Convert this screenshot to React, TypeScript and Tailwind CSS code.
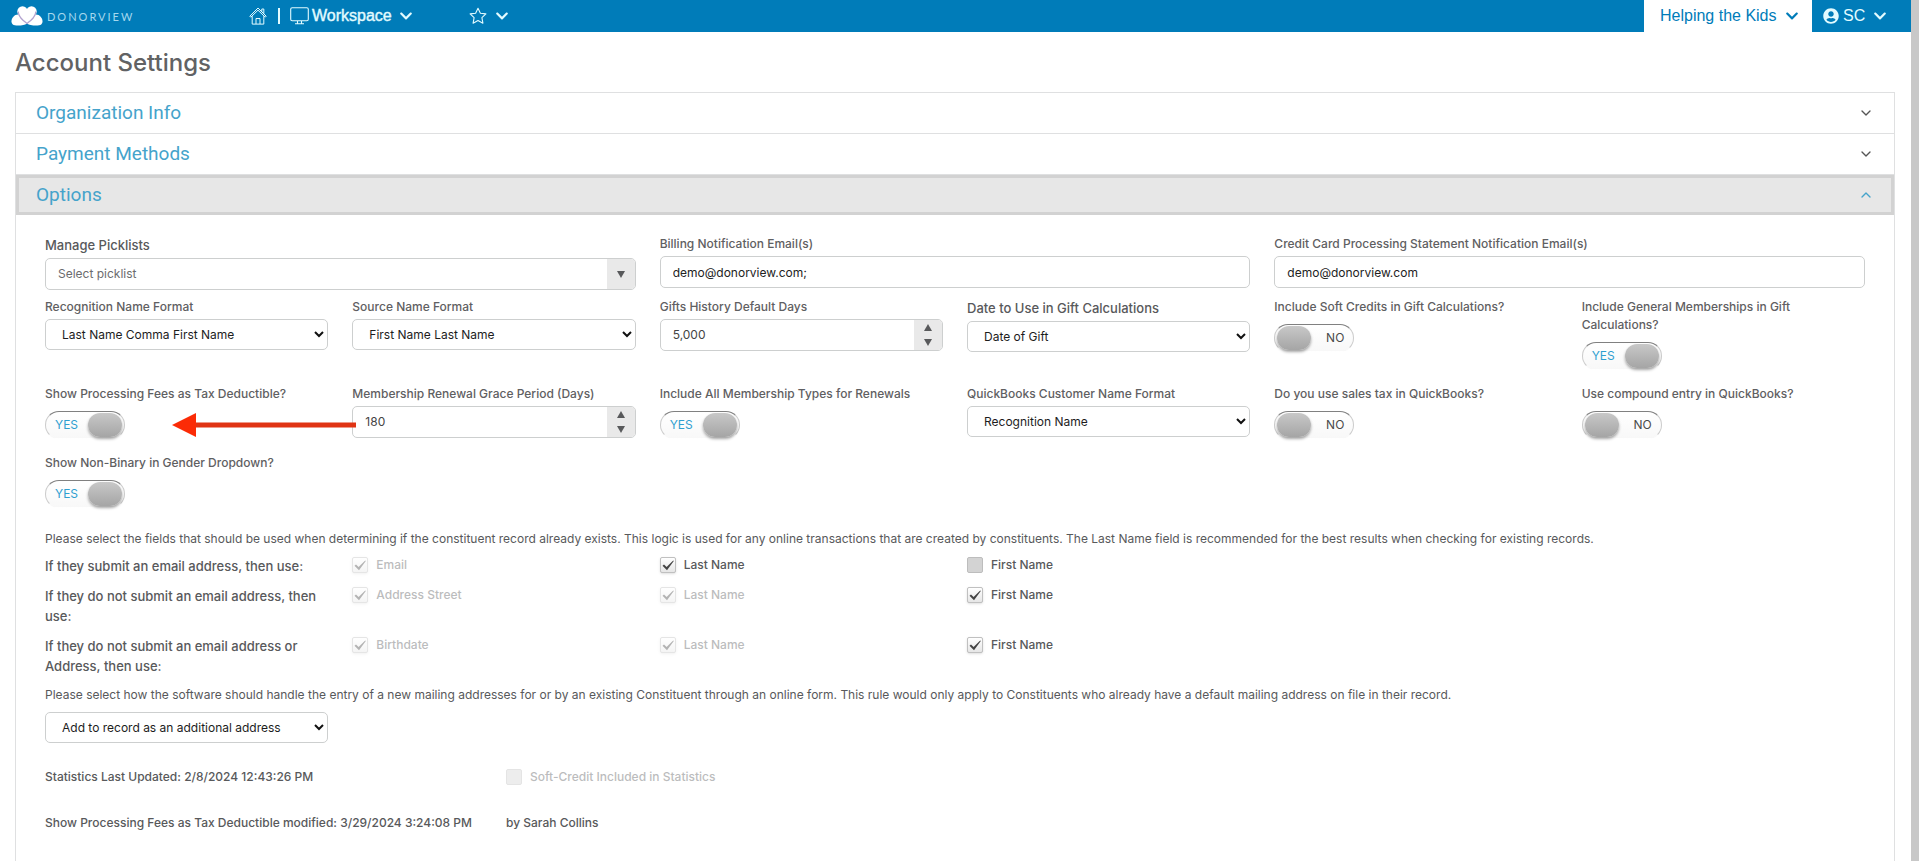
import { useState } from "react";
import type { ReactNode } from "react";
import { FaChevronDown, FaUserCircle } from "react-icons/fa";
import { ChevronDown, ChevronUp } from "lucide-react";

const labelSmall = "block text-xs leading-[18px] font-medium text-[#5f6062]";
const labelLarge = "block text-[13px] leading-5 font-medium text-[#58595b]";

function Logo() {
  return (
    <svg width="32" height="20" viewBox="0 0 32 20" aria-hidden="true">
      <g fill="#fff">
        <circle cx="11.5" cy="5.5" r="5.2" />
        <circle cx="20.5" cy="5.5" r="5.2" />
        <path d="M7 7 L25 7 L16 18 Z" />
        <path d="M7 8.5c3 .5 7 5 8.5 9.3C14 19.5 4 20.5 1.8 18.5-1.5 15 2 8.5 7 8.5Z" />
        <path d="M25 8.5c-3 .5-7 5-8.5 9.3C18 19.5 28 20.5 30.2 18.5 33.5 15 30 8.5 25 8.5Z" />
      </g>
      <path
        d="M7.2 5.5C7.2 11 12 14.5 16 17.5 20 14.5 24.8 11 24.8 5.5"
        fill="none"
        stroke="#b3a3cf"
        strokeWidth="1.2"
      />
    </svg>
  );
}

function HomeIcon() {
  return (
    <svg width="18" height="18" viewBox="0 0 18 18" fill="none" stroke="currentColor" strokeWidth="1" aria-hidden="true">
      <path d="M.8 9.2 9 1l8.2 8.2-1 1L9 3.2 1.8 10.2Z" />
      <path d="M3.2 9.2v7.9h11.6V9.2M12.8 4.7V2h2v4.8" />
      <path d="M7 17v-5.5h4V17" />
    </svg>
  );
}

function MonitorIcon() {
  return (
    <svg width="19" height="18" viewBox="0 0 19 18" fill="none" stroke="currentColor" strokeWidth="1.1" aria-hidden="true">
      <rect x=".7" y=".7" width="17.6" height="13" rx="1.5" />
      <path d="M7.5 14v2.5M11.5 14v2.5M5 16.8h9" />
    </svg>
  );
}

function StarIcon() {
  return (
    <svg width="18" height="18" viewBox="0 0 18 18" fill="none" stroke="currentColor" strokeWidth="1.1" strokeLinejoin="round" aria-hidden="true">
      <path d="m9 1.2 2.4 5 5.5.7-4 3.8 1 5.5L9 13.5l-4.9 2.7 1-5.5-4-3.8 5.5-.7Z" />
    </svg>
  );
}

function Field({ id, label, large, span, children }: { id: string; label: string; large?: boolean; span?: boolean; children: ReactNode }) {
  return (
    <div className={span ? "relative col-span-2" : "relative"}>
      <label htmlFor={id} className={`${large ? labelLarge : labelSmall} mb-[3px]`}>
        {label}
      </label>
      {children}
    </div>
  );
}

function Select({ id, value, label }: { id: string; value: string; label?: string }) {
  return (
    <div className="relative">
      <select
        id={id}
        aria-label={label}
        className="block h-[31px] w-full appearance-none rounded-[5px] border border-[#cdcfcf] bg-white pr-6 pl-4 text-xs text-[#1d1d1d]"
      >
        <option>{value}</option>
      </select>
      <svg className="pointer-events-none absolute top-3 right-1" width="10" height="7" viewBox="0 0 10 7" fill="none" stroke="#111" strokeWidth="2" aria-hidden="true">
        <path d="M1 1l4 4 4-4" />
      </svg>
    </div>
  );
}

function TextInput({ id, value }: { id: string; value: string }) {
  return (
    <input
      id={id}
      type="text"
      defaultValue={value}
      className="block h-8 w-full rounded-[5px] border border-[#cdcfcf] bg-white px-3 text-xs text-[#222]"
    />
  );
}

function Triangle({ up }: { up?: boolean }) {
  return (
    <svg width="8" height="7" viewBox="0 0 8 7" fill="#58595b" aria-hidden="true">
      <path d={up ? "M4 0l4 7H0z" : "M4 7L0 0h8z"} />
    </svg>
  );
}

function NumberInput({ id, value }: { id: string; value: string }) {
  return (
    <div className="flex h-8 overflow-hidden rounded-[5px] border border-[#cdcfcf] bg-white">
      <input id={id} type="text" inputMode="numeric" defaultValue={value} className="min-w-0 flex-1 px-3 text-xs text-[#444]" />
      <div className="flex w-7 flex-col bg-[#e9e9e9]">
        <button type="button" aria-label="Increase" className="flex flex-1 items-center justify-center">
          <Triangle up />
        </button>
        <button type="button" aria-label="Decrease" className="flex flex-1 items-center justify-center">
          <Triangle />
        </button>
      </div>
    </div>
  );
}

function Toggle({ id, on }: { id: string; on?: boolean }) {
  const [checked, setChecked] = useState(!!on);
  return (
    <label className="relative mt-2 mb-[5px] flex h-7 w-20 cursor-pointer items-center rounded-full border border-t-[#808080] border-r-[#cccccc] border-b-transparent border-l-[#cccccc] bg-gradient-to-b from-white to-[#f8f8f8] px-0.5">
      <input
        id={id}
        type="checkbox"
        role="switch"
        checked={checked}
        onChange={(e) => setChecked(e.target.checked)}
        className="absolute inset-0 appearance-none rounded-full"
      />
      <span className={`flex w-full items-center ${checked ? "" : "flex-row-reverse"}`}>
        <span className={`flex-1 px-[7px] text-xs ${checked ? "text-left text-[#2f9fd0]" : "text-right text-[#4a4a4a]"}`}>
          {checked ? "YES" : "NO"}
        </span>
        <span className="h-6 w-[34px] rounded-full bg-gradient-to-b from-[#c8c8c8] to-[#a5a5a5] shadow-[0_2px_3px_rgba(0,0,0,0.35)]" />
      </span>
    </label>
  );
}

function Tick({ id, label, on, disabled }: { id: string; label: string; on?: boolean; disabled?: boolean }) {
  return (
    <div className={`flex h-[18px] items-center gap-2 ${disabled ? "opacity-40" : ""}`}>
      <span className="relative block size-4">
        <input
          id={id}
          type="checkbox"
          defaultChecked={on}
          disabled={disabled}
          className="peer block size-4 appearance-none rounded-xs border border-[#bdbdbd] bg-[#d3d3d3] checked:border-[#c0c0c0] checked:bg-gradient-to-b checked:from-white checked:to-[#e6e6e6] checked:shadow-sm"
        />
        <svg
          className="pointer-events-none absolute inset-0 hidden peer-checked:block"
          width="16"
          height="16"
          viewBox="0 0 16 16"
          fill="#444"
          aria-hidden="true"
        >
          <path d="M2.5 8.8 4 7.6l2.6 2.5 6.6-6.6.6.6L7 13.2Z" />
        </svg>
      </span>
      <label htmlFor={id} className="text-xs leading-[18px] font-medium text-[#58595b]">
        {label}
      </label>
    </div>
  );
}

function Arrow() {
  return (
    <svg className="pointer-events-none absolute top-7 left-[127px] z-10" width="184" height="24" viewBox="0 0 184 24" aria-hidden="true">
      <path d="M20 9.5h164v5H20z" fill="#e03414" />
      <path d="M0 12L24 0v24z" fill="#fb2b06" />
    </svg>
  );
}

const closedSections = ["Organization Info", "Payment Methods"];

const matchRules = [
  {
    text: "If they submit an email address, then use:",
    ticks: [
      { label: "Email", on: true, disabled: true },
      { label: "Last Name", on: true, disabled: false },
      { label: "First Name", on: false, disabled: false },
    ],
  },
  {
    text: "If they do not submit an email address, then use:",
    ticks: [
      { label: "Address Street", on: true, disabled: true },
      { label: "Last Name", on: true, disabled: true },
      { label: "First Name", on: true, disabled: false },
    ],
  },
  {
    text: "If they do not submit an email address or Address, then use:",
    ticks: [
      { label: "Birthdate", on: true, disabled: true },
      { label: "Last Name", on: true, disabled: true },
      { label: "First Name", on: true, disabled: false },
    ],
  },
];

function TopBar() {
  return (
    <header className="flex h-8 items-stretch bg-[#007cb9] font-['Liberation_Sans',Arial,sans-serif] text-[#e2fbff]">
      <a href="#" className="flex w-[249px] items-center gap-1 pl-[11px]">
        <Logo />
        <span className="font-[Lato,sans-serif] text-[11px] leading-none tracking-[2px] text-[#a5d8ee]">DONORVIEW</span>
      </a>
      <nav className="flex flex-1 items-center">
        <a href="#" aria-label="Home">
          <HomeIcon />
        </a>
        <span className="mr-2.5 ml-[11px] h-4 w-0.5 bg-[#e2fbff]" />
        <button type="button" className="flex items-center gap-[3px] text-base">
          <MonitorIcon />
          <span className="[-webkit-text-stroke:0.4px_currentColor]">Workspace</span>
          <FaChevronDown className="ml-1 size-3.5" />
        </button>
        <button type="button" aria-label="Favorites" className="ml-14 flex items-center gap-2">
          <StarIcon />
          <FaChevronDown className="size-3.5" />
        </button>
      </nav>
      <button type="button" className="flex w-[168px] items-center gap-2 bg-white pl-4 text-base text-[#007cb9]">
        Helping the Kids
        <FaChevronDown className="size-3.5" />
      </button>
      <button type="button" className="flex w-[99px] items-center gap-1 pl-[11px] text-base">
        <FaUserCircle className="size-4" />
        SC
        <FaChevronDown className="ml-1 size-3.5" />
      </button>
    </header>
  );
}

function OptionsPanel() {
  return (
    <div className="px-[29px] pt-5 pb-7 text-[#58595b]">
      <div className="grid grid-cols-6 gap-x-6">
        <Field id="picklists" label="Manage Picklists" large span>
          <div className="flex h-8 overflow-hidden rounded-[5px] border border-[#cdcfcf] bg-white">
            <input id="picklists" type="text" placeholder="Select picklist" className="min-w-0 flex-1 px-3 text-xs placeholder:text-[#6b6c6e]" />
            <button type="button" aria-label="Open picklists" className="flex w-7 items-center justify-center bg-[#e9e9e9]">
              <Triangle />
            </button>
          </div>
        </Field>
        <Field id="billing" label="Billing Notification Email(s)" span>
          <TextInput id="billing" value="demo@donorview.com;" />
        </Field>
        <Field id="statement" label="Credit Card Processing Statement Notification Email(s)" span>
          <TextInput id="statement" value="demo@donorview.com" />
        </Field>
      </div>
      <div className="mt-2 grid grid-cols-6 gap-x-6 gap-y-2.5">
        <Field id="recognition" label="Recognition Name Format">
          <Select id="recognition" value="Last Name Comma First Name" />
        </Field>
        <Field id="source" label="Source Name Format">
          <Select id="source" value="First Name Last Name" />
        </Field>
        <Field id="history" label="Gifts History Default Days">
          <NumberInput id="history" value="5,000" />
        </Field>
        <Field id="gift-date" label="Date to Use in Gift Calculations" large>
          <Select id="gift-date" value="Date of Gift" />
        </Field>
        <Field id="soft-credits" label="Include Soft Credits in Gift Calculations?">
          <Toggle id="soft-credits" />
        </Field>
        <Field id="memberships" label="Include General Memberships in Gift Calculations?">
          <Toggle id="memberships" on />
        </Field>
        <Field id="fees" label="Show Processing Fees as Tax Deductible?">
          <Toggle id="fees" on />
          <Arrow />
        </Field>
        <Field id="grace" label="Membership Renewal Grace Period (Days)">
          <NumberInput id="grace" value="180" />
        </Field>
        <Field id="renewals" label="Include All Membership Types for Renewals">
          <Toggle id="renewals" on />
        </Field>
        <Field id="qb-name" label="QuickBooks Customer Name Format">
          <Select id="qb-name" value="Recognition Name" />
        </Field>
        <Field id="sales-tax" label="Do you use sales tax in QuickBooks?">
          <Toggle id="sales-tax" />
        </Field>
        <Field id="compound" label="Use compound entry in QuickBooks?">
          <Toggle id="compound" />
        </Field>
        <Field id="non-binary" label="Show Non-Binary in Gender Dropdown?">
          <Toggle id="non-binary" on />
        </Field>
      </div>

      <p className="mt-[17px] text-xs leading-[18px]">
        Please select the fields that should be used when determining if the constituent record already exists. This logic is used for any online transactions that are created by constituents. The Last Name field is recommended for the best results when checking for existing records.
      </p>
      <div className="mt-2 flex flex-col gap-2.5">
        {matchRules.map((rule, row) => (
          <div key={row} className="grid grid-cols-6 gap-x-6">
            <p className={labelLarge}>{rule.text}</p>
            {rule.ticks.map((tick, col) => (
              <Tick key={col} id={`rule-${row}-${col}`} {...tick} />
            ))}
          </div>
        ))}
      </div>
      <p className="mt-2.5 text-xs leading-[18px]">
        Please select how the software should handle the entry of a new mailing addresses for or by an existing Constituent through an online form. This rule would only apply to Constituents who already have a default mailing address on file in their record.
      </p>
      <div className="mt-2 grid grid-cols-6 gap-x-6">
        <Select id="address-rule" label="Mailing address rule" value="Add to record as an additional address" />
      </div>
      <div className="mt-[25px] grid grid-cols-4 gap-x-6 text-xs leading-[18px] font-medium">
        <p>Statistics Last Updated: 2/8/2024 12:43:26 PM</p>
        <Tick id="soft-stats" label="Soft-Credit Included in Statistics" disabled />
      </div>
      <div className="mt-7 grid grid-cols-4 gap-x-6 text-xs leading-[18px] font-medium">
        <p className="whitespace-nowrap">Show Processing Fees as Tax Deductible modified: 3/29/2024 3:24:08 PM</p>
        <p>by Sarah Collins</p>
      </div>
    </div>
  );
}

export default function App() {
  return (
    <div className="flex min-h-screen bg-white font-[Inter,sans-serif]">
      <div className="flex min-w-0 flex-1 flex-col">
        <TopBar />
        <main className="flex flex-1 flex-col pr-4 pl-[15px]">
          <h1 className="mt-[15px] mb-[13px] text-2xl leading-8 font-medium text-[#616264]">Account Settings</h1>
          <div className="flex-1 border border-b-0 border-[#dfe0e1]">
            {closedSections.map((title) => (
              <button
                key={title}
                type="button"
                className="flex h-[41px] w-full items-center justify-between border-b border-[#dfe0e1] px-5 font-[Roboto,sans-serif] text-[19px] text-[#45a3cb]"
              >
                {title}
                <ChevronDown className="size-4 text-[#555]" />
              </button>
            ))}
            <button
              type="button"
              className="flex h-10 w-full items-center justify-between border-[3px] border-[#d2d2d2] bg-[#e7e7e7] px-[17px] font-[Roboto,sans-serif] text-[19px] text-[#45a3cb]"
            >
              Options
              <ChevronUp className="size-4" />
            </button>
            <OptionsPanel />
          </div>
        </main>
      </div>
      <div className="w-2 bg-[#c8c8c8]" />
    </div>
  );
}
